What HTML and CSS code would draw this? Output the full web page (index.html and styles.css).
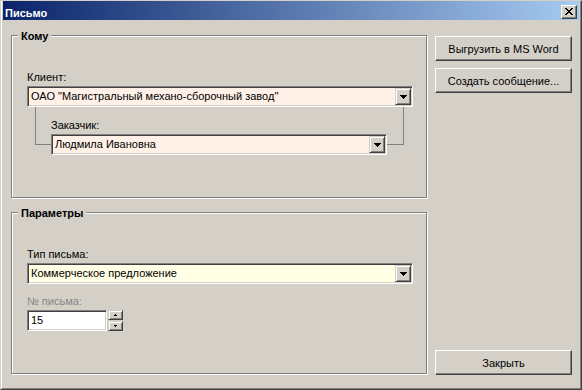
FILE: index.html
```html
<!DOCTYPE html>
<html lang="ru">
<head>
  <meta charset="UTF-8">
  <title>Письмо</title>
  <link rel="stylesheet" href="styles.css">
</head>
<body>
  <div class="window">
    <div class="frame">
      <div class="titlebar">
        <span class="title">Письмо</span>
        <span class="close-btn">
          <svg width="8" height="7" shape-rendering="crispEdges">
            <path d="M0 0h2v1h-2zM6 0h2v1h-2zM1 1h2v1h-2zM5 1h2v1h-2zM2 2h4v1h-4zM3 3h2v1h-2zM2 4h4v1h-4zM1 5h2v1h-2zM5 5h2v1h-2zM0 6h2v1h-2zM6 6h2v1h-2z" fill="#000"/>
          </svg>
        </span>
      </div>

      <div class="client">
        <div class="main">
          <div class="group">
            <span class="legend">Кому</span>
            <div class="label">Клиент:</div>
            <div class="combo combo-pink">
              <span class="combo-text">ОАО "Магистральный механо-сборочный завод"</span>
              <span class="combo-btn">
                <svg width="7" height="4" shape-rendering="crispEdges"><path d="M0 0h7v1h-7zM1 1h5v1h-5zM2 2h3v1h-3zM3 3h1v1h-1z" fill="#000"/></svg>
              </span>
            </div>
            <div class="linked">
              <div class="label">Заказчик:</div>
              <div class="combo combo-pink combo-sub">
                <span class="combo-text">Людмила Ивановна</span>
                <span class="combo-btn">
                  <svg width="7" height="4" shape-rendering="crispEdges"><path d="M0 0h7v1h-7zM1 1h5v1h-5zM2 2h3v1h-3zM3 3h1v1h-1z" fill="#000"/></svg>
                </span>
              </div>
            </div>
          </div>

          <div class="group group-params">
            <span class="legend">Параметры</span>
            <div class="label">Тип письма:</div>
            <div class="combo combo-yellow">
              <span class="combo-text">Коммерческое предложение</span>
              <span class="combo-btn">
                <svg width="7" height="4" shape-rendering="crispEdges"><path d="M0 0h7v1h-7zM1 1h5v1h-5zM2 2h3v1h-3zM3 3h1v1h-1z" fill="#000"/></svg>
              </span>
            </div>
            <div class="label label-disabled">№ письма:</div>
            <div class="spin">
              <div class="edit">15</div>
              <div class="spin-btns">
                <span class="spin-btn">
                  <svg width="3" height="2" shape-rendering="crispEdges"><path d="M1 0h1v1h-1zM0 1h3v1h-3z" fill="#000"/></svg>
                </span>
                <span class="spin-btn">
                  <svg width="3" height="2" shape-rendering="crispEdges"><path d="M0 0h3v1h-3zM1 1h1v1h-1z" fill="#000"/></svg>
                </span>
              </div>
            </div>
          </div>
        </div>

        <div class="side">
          <button class="btn">Выгрузить в MS Word</button>
          <button class="btn">Создать сообщение...</button>
          <button class="btn btn-close">Закрыть</button>
        </div>
      </div>
    </div>
  </div>
</body>
</html>
```

FILE: styles.css
```css
body { margin: 0; font-family: "Liberation Sans", Arial, sans-serif; font-size: 11px; color: #000; }
.window { width: 582px; height: 390px; box-sizing: border-box; background: #d4d0c8; border: 1px solid; border-color: #d4d0c8 #404040 #404040 #d4d0c8; }
.frame { height: 100%; box-sizing: border-box; display: flex; flex-direction: column; border-left: 1px solid #fff; border-right: 1px solid #808080; border-bottom: 1px solid #808080; padding: 0 1px 1px 1px; }

.titlebar { height: 19px; flex: none; display: flex; align-items: flex-start; justify-content: space-between; padding: 0 2px 0 2px; background: linear-gradient(to right, #0a246a, #a6caf0); }
.title { color: #fff; font-weight: bold; line-height: 13px; padding-top: 6px; }
.close-btn { width: 16px; height: 14px; margin-top: 4px; box-sizing: border-box; padding: 2px 0 0 3px; background: #d4d0c8; border: 1px solid; border-color: #fff #404040 #404040 #fff; box-shadow: inset -1px -1px #808080; }
.close-btn svg { display: block; }

.client { flex: 1; display: flex; gap: 8px; padding: 15px 7px 12px 8px; }
.main { width: 416px; display: flex; flex-direction: column; gap: 14px; }
.side { width: 137px; display: flex; flex-direction: column; gap: 7px; padding-top: 1px; }

.group { position: relative; height: 163px; box-sizing: border-box; padding: 35px 13px 0 15px; border: 1px solid #808080; box-shadow: inset 1px 1px #fff, 1px 1px #fff; }
.group-params { height: 162px; }
.legend { position: absolute; top: -6px; left: 6px; padding: 0 3px; line-height: 13px; font-weight: bold; background: #d4d0c8; }

.label { line-height: 13px; margin-bottom: 2px; }
.label-disabled { color: #868686; margin-top: 11px; }

.combo { height: 21px; box-sizing: border-box; display: flex; align-items: stretch; padding: 1px; border: 1px solid; border-color: #808080 #fff #fff #808080; box-shadow: inset 1px 1px #404040, inset -1px -1px #d4d0c8; }
.combo-pink { background: #fff0e8; }
.combo-yellow { background: #ffffe6; }
.combo-text { flex: 1; padding-left: 2px; line-height: 17px; white-space: nowrap; overflow: hidden; }
.combo-btn { width: 16px; box-sizing: border-box; display: flex; align-items: center; justify-content: center; background: #d4d0c8; border: 1px solid; border-color: #d4d0c8 #404040 #404040 #d4d0c8; box-shadow: inset 1px 1px #fff, inset -1px -1px #808080; }
.combo-btn svg, .spin-btn svg { display: block; }

.linked { margin: 0 9px 0 8px; padding: 12px 16px 0 15px; border: 1px solid #808080; border-top: 0; }
.combo-sub { margin-bottom: -11px; }

.spin { display: flex; gap: 1px; }
.edit { width: 80px; height: 21px; box-sizing: border-box; padding: 1px 3px; line-height: 17px; background: #fff; border: 1px solid; border-color: #808080 #fff #fff #808080; box-shadow: inset 1px 1px #404040, inset -1px -1px #d4d0c8; }
.spin-btns { display: flex; flex-direction: column; gap: 1px; }
.spin-btn { width: 15px; height: 10px; box-sizing: border-box; display: flex; align-items: center; justify-content: center; background: #d4d0c8; border: 1px solid; border-color: #d4d0c8 #404040 #404040 #d4d0c8; box-shadow: inset 1px 1px #fff, inset -1px -1px #808080; }

.btn { height: 25px; padding: 0; font-family: inherit; font-size: 11px; color: #000; background: #d4d0c8; border: 1px solid; border-color: #fff #404040 #404040 #fff; box-shadow: inset -1px -1px #808080; }
.btn-close { margin-top: auto; }
```
